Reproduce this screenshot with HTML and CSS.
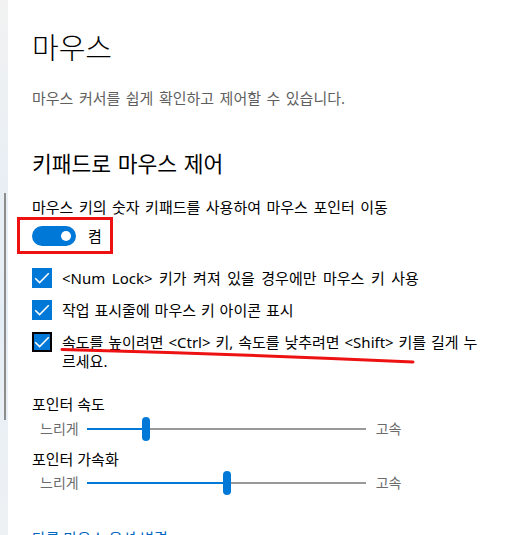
FILE: index.html
```html
<!DOCTYPE html>
<html lang="ko">
<head>
<meta charset="utf-8">
<title>마우스</title>
<link rel="stylesheet" href="styles.css">
</head>
<body>
<div class="app">
  <div class="edge">
    <div class="scroll-thumb"></div>
  </div>
  <main class="main">
    <h1 class="title">마우스</h1>
    <p class="subtitle">마우스 커서를 쉽게 확인하고 제어할 수 있습니다.</p>
    <h2 class="heading">키패드로 마우스 제어</h2>
    <p class="label">마우스 키의 숫자 키패드를 사용하여 마우스 포인터 이동</p>
    <div class="toggle-row">
      <span class="toggle"><span class="knob"></span></span>
      <span class="toggle-text">켬</span>
      <span class="mark-box"></span>
    </div>
    <div class="check-row first">
      <span class="check"><svg viewBox="0 0 20 20" width="20" height="20"><path d="M3.2 10.2 L7.6 14.6 L16.8 5.2" fill="none" stroke="#fff" stroke-width="1.5"/></svg></span>
      <span class="check-text wide">&lt;Num Lock&gt; 키가 켜져 있을 경우에만 마우스 키 사용</span>
    </div>
    <div class="check-row">
      <span class="check"><svg viewBox="0 0 20 20" width="20" height="20"><path d="M3.2 10.2 L7.6 14.6 L16.8 5.2" fill="none" stroke="#fff" stroke-width="1.5"/></svg></span>
      <span class="check-text">작업 표시줄에 마우스 키 아이콘 표시</span>
    </div>
    <div class="check-row">
      <span class="check focused"><svg viewBox="0 0 16 16" width="16" height="16"><path d="M1.2 8.2 L5.6 12.6 L14.8 3.2" fill="none" stroke="#fff" stroke-width="1.5"/></svg></span>
      <span class="check-text">속도를 높이려면 &lt;Ctrl&gt; 키, 속도를 낮추려면 &lt;Shift&gt; 키를 길게 누르세요.</span>
      <svg class="mark-line" width="400" height="40" viewBox="0 0 400 40"><path d="M30 17.5 Q 205 22 381 30" fill="none" stroke="#ee1111" stroke-width="3" stroke-linecap="round"/></svg>
    </div>
    <p class="slider-title">포인터 속도</p>
    <div class="slider-row">
      <span class="end-label">느리게</span>
      <span class="track">
        <span class="fill" style="width:55px"></span>
        <span class="thumb"></span>
        <span class="rest"></span>
      </span>
      <span class="end-label">고속</span>
    </div>
    <p class="slider-title second">포인터 가속화</p>
    <div class="slider-row second">
      <span class="end-label">느리게</span>
      <span class="track">
        <span class="fill" style="width:136px"></span>
        <span class="thumb"></span>
        <span class="rest"></span>
      </span>
      <span class="end-label">고속</span>
    </div>
    <a class="link" href="#">다른 마우스 옵션 변경</a>
  </main>
</div>
</body>
</html>
```
FILE: styles.css
```css
html, body {
  margin: 0;
  padding: 0;
  background: #fff;
  height: 100%;
  overflow: hidden;
}
body {
  font-family: "Noto Sans", "Noto Sans CJK KR", sans-serif;
  color: #000;
  font-size: 15px;
}
.app {
  display: flex;
  height: 535px;
}
.edge {
  width: 8px;
  flex: none;
  background: linear-gradient(#f2f2f2 0%, #e9eff4 30%, #e6eef5 60%, #eef1f4 100%);
  padding-top: 193px;
  box-sizing: border-box;
}
.scroll-thumb {
  width: 2px;
  height: 227px;
  margin-left: 4px;
  background: #8c8c8c;
}
.main {
  flex: 1;
  padding: 28px 0 0 24px;
  display: flex;
  flex-direction: column;
  align-items: flex-start;
}
.title {
  margin: 0;
  font-size: 29px;
  font-weight: 300;
  line-height: 40px;
}
.subtitle {
  margin: 20px 0 0;
  font-size: 15px;
  line-height: 20px;
  color: #5f5f5f;
  word-spacing: 1.6px;
}
.heading {
  margin: 42px 0 0;
  font-size: 21.5px;
  font-weight: 400;
  line-height: 28px;
  word-spacing: 1px;
}
.label {
  margin: 19px 0 0;
  line-height: 20px;
  word-spacing: 1.6px;
}
.toggle-row {
  position: relative;
  margin-top: 9px;
  height: 20px;
  display: flex;
  align-items: center;
  gap: 12px;
}
.toggle {
  width: 44px;
  height: 20px;
  border-radius: 10px;
  background: #0078d7;
  display: flex;
  align-items: center;
  justify-content: flex-end;
  padding-right: 5px;
  box-sizing: border-box;
}
.knob {
  width: 10px;
  height: 10px;
  border-radius: 50%;
  background: #fff;
}
.toggle-text {
  line-height: 20px;
}
.mark-box {
  position: absolute;
  left: -15px;
  top: -9px;
  width: 96px;
  height: 37px;
  border: 3px solid #ee1111;
  box-sizing: border-box;
}
.check-row {
  position: relative;
  margin-top: 12px;
  display: flex;
  align-items: flex-start;
  gap: 10px;
  width: 448px;
}
.check-row.first {
  margin-top: 22px;
}
.check {
  flex: none;
  width: 20px;
  height: 20px;
  background: #0078d7;
  display: flex;
  align-items: center;
  justify-content: center;
  box-sizing: border-box;
}
.check.focused {
  border: 2px solid #000;
}
.check-text {
  line-height: 19px;
  padding-top: 0.5px;
  word-spacing: 1px;
}
.check-text.wide {
  word-spacing: 2.6px;
}
.mark-line {
  position: absolute;
  left: 0;
  top: 0;
  overflow: visible;
}
.slider-title {
  margin: 23px 0 0;
  line-height: 20px;
}
.slider-title.second {
  margin-top: 8px;
}
.slider-row {
  margin-top: 3px;
  height: 24px;
  display: flex;
  align-items: center;
  padding-left: 8px;
  gap: 8px;
}
.slider-row.second {
  margin-top: 2px;
}
.end-label {
  color: #6b6b6b;
  line-height: 20px;
  font-size: 14px;
}
.track {
  width: 279px;
  height: 24px;
  display: flex;
  align-items: center;
  margin-right: 2px;
}
.fill {
  height: 2px;
  background: #0078d7;
  flex: none;
}
.thumb {
  width: 8px;
  height: 24px;
  border-radius: 4px;
  background: #0078d7;
  flex: none;
}
.rest {
  flex: 1;
  height: 2px;
  background: #999;
}
.link {
  margin-top: 33px;
  line-height: 20px;
  color: #0067c0;
  text-decoration: none;
}
```
